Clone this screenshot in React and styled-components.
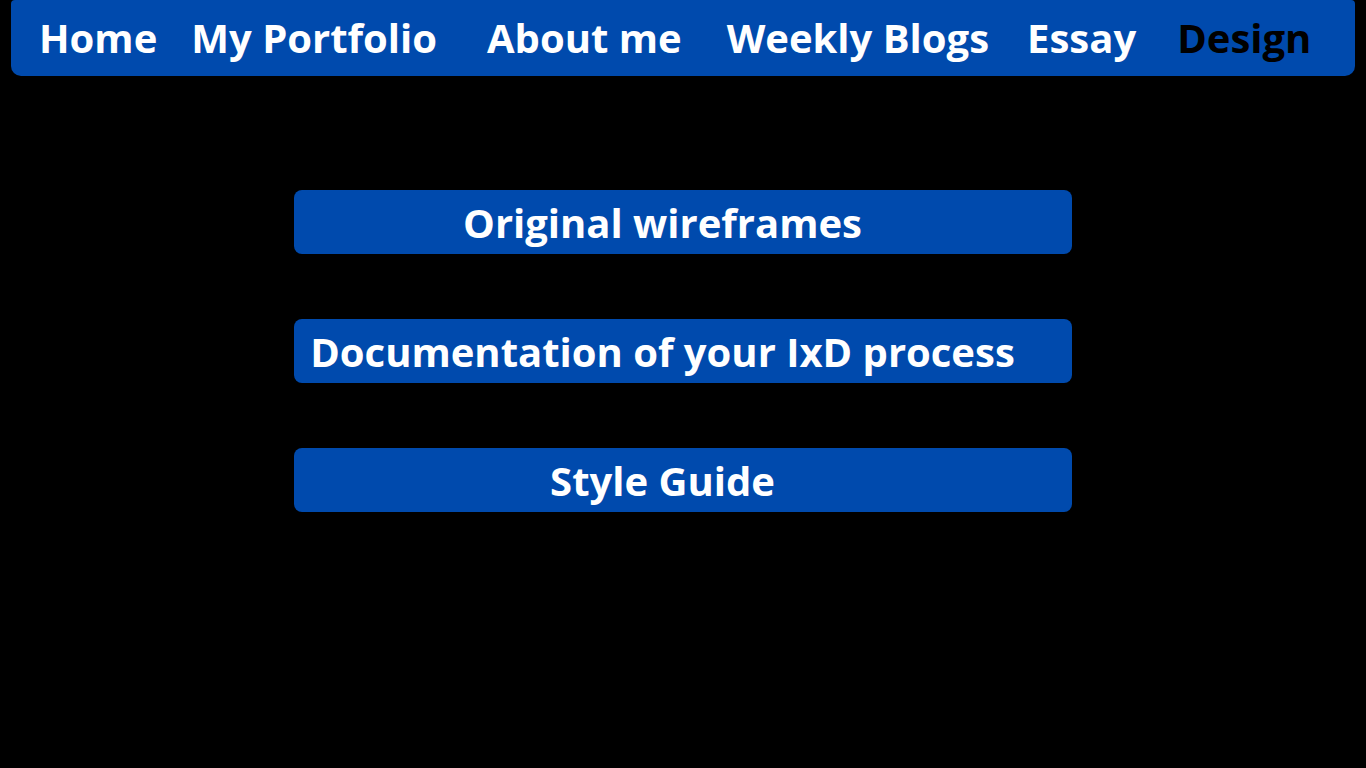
import React from 'react'
import styled, { createGlobalStyle } from 'styled-components'

const Global = createGlobalStyle`
    body{
        margin: 0;
        background: #000;
        font-family: "Open Sans", "Liberation Sans", sans-serif;
    }
`
const Page = styled.div`
    width: 1366px;
    height: 768px;
    background: #000;
    padding: 0 11px;
    box-sizing: border-box;
`
const Nav = styled.nav`
    height: 76px;
    background: #004aad;
    border-radius: 4px 4px 10px 10px;
    display: flex;
    align-items: center;
    padding-left: 28px;
`
const NavItem = styled.a`
    color: ${props => props.active ? '#000' : '#fff'};
    font-size: 40px;
    font-weight: 700;
    text-decoration: none;
    margin-right: ${props => props.gap}px;
    white-space: nowrap;
    line-height: 1;
`
const List = styled.div`
    display: flex;
    flex-direction: column;
    gap: 65px;
    width: 778px;
    margin: 114px auto 0 283px;
`
const Button = styled.a`
    height: 64px;
    background: #004aad;
    border-radius: 8px;
    display: flex;
    align-items: center;
    justify-content: center;
    padding: 0 54px 0 13px;
    color: #fff;
    font-size: 40px;
    font-weight: 700;
    text-decoration: none;
    white-space: nowrap;
`

const links = [
    { label: 'Home', gap: 34 },
    { label: 'My Portfolio', gap: 50 },
    { label: 'About me', gap: 45 },
    { label: 'Weekly Blogs', gap: 38 },
    { label: 'Essay', gap: 41 },
    { label: 'Design', gap: 0, active: true },
]

const items = ['Original wireframes', 'Documentation of your IxD process', 'Style Guide']

const App = () => {
    return(
        <Page>
            <Global />
            <Nav>
                {links.map(l => (
                    <NavItem key={l.label} href="#" gap={l.gap} active={l.active}>{l.label}</NavItem>
                ))}
            </Nav>
            <List>
                {items.map(i => <Button key={i} href="#">{i}</Button>)}
            </List>
        </Page>
    )
}

export default App
